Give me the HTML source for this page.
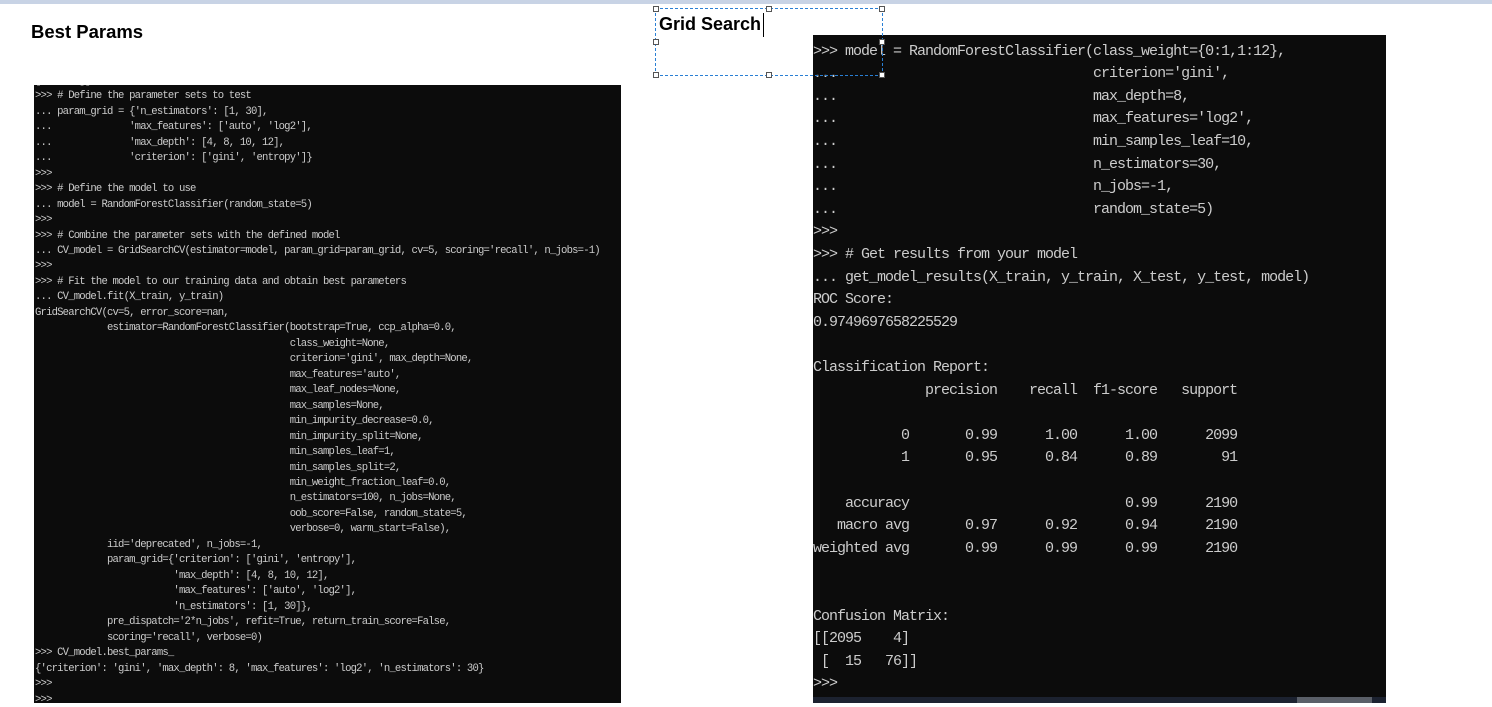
<!DOCTYPE html>
<html><head><style>
body{margin:0;width:1492px;height:707px;background:#fff;position:relative;overflow:hidden;font-family:"Liberation Sans",sans-serif}
.bar{position:absolute;left:0;top:0;width:1492px;height:4px;background:#c8d3e5}
.t{position:absolute;font-weight:bold;font-size:18px;color:#000}
.term{position:absolute;background:#0c0c0c;overflow:hidden}
pre{margin:0;position:absolute;left:0;color:#cccccc;font-family:"Liberation Mono",monospace}
#L{left:34px;top:85px;width:587px;height:618px}
#L pre{font-size:10.6px;line-height:15.47px;letter-spacing:-0.82px;top:-11.2px;left:1px}
#R{left:813px;top:35px;width:573px;height:668px}
#R pre{font-size:15px;line-height:22.6px;letter-spacing:-1px;top:5.7px;left:0}
.sb{position:absolute;left:0;bottom:0;width:573px;height:6px;background:#1c2230}
.th{position:absolute;left:484px;bottom:0;width:75px;height:6px;background:#5a5f68}
.box{position:absolute;left:655px;top:8px;width:226px;height:66px;border:1px dashed #2a7fd4}
.h{position:absolute;width:4px;height:4px;border:1px solid #555;background:#fff}
</style></head><body>
<div class="bar"></div>
<div class="t" style="left:31px;top:21px;font-size:18.5px">Best Params</div>
<div class="term" id="L"><pre>[  ...  ]]
&gt;&gt;&gt; # Define the parameter sets to test
... param_grid = {'n_estimators': [1, 30],
...              'max_features': ['auto', 'log2'],
...              'max_depth': [4, 8, 10, 12],
...              'criterion': ['gini', 'entropy']}
&gt;&gt;&gt;
&gt;&gt;&gt; # Define the model to use
... model = RandomForestClassifier(random_state=5)
&gt;&gt;&gt;
&gt;&gt;&gt; # Combine the parameter sets with the defined model
... CV_model = GridSearchCV(estimator=model, param_grid=param_grid, cv=5, scoring='recall', n_jobs=-1)
&gt;&gt;&gt;
&gt;&gt;&gt; # Fit the model to our training data and obtain best parameters
... CV_model.fit(X_train, y_train)
GridSearchCV(cv=5, error_score=nan,
             estimator=RandomForestClassifier(bootstrap=True, ccp_alpha=0.0,
                                              class_weight=None,
                                              criterion='gini', max_depth=None,
                                              max_features='auto',
                                              max_leaf_nodes=None,
                                              max_samples=None,
                                              min_impurity_decrease=0.0,
                                              min_impurity_split=None,
                                              min_samples_leaf=1,
                                              min_samples_split=2,
                                              min_weight_fraction_leaf=0.0,
                                              n_estimators=100, n_jobs=None,
                                              oob_score=False, random_state=5,
                                              verbose=0, warm_start=False),
             iid='deprecated', n_jobs=-1,
             param_grid={'criterion': ['gini', 'entropy'],
                         'max_depth': [4, 8, 10, 12],
                         'max_features': ['auto', 'log2'],
                         'n_estimators': [1, 30]},
             pre_dispatch='2*n_jobs', refit=True, return_train_score=False,
             scoring='recall', verbose=0)
&gt;&gt;&gt; CV_model.best_params_
{'criterion': 'gini', 'max_depth': 8, 'max_features': 'log2', 'n_estimators': 30}
&gt;&gt;&gt;
&gt;&gt;&gt;</pre></div>
<div class="term" id="R"><pre>&gt;&gt;&gt; model = RandomForestClassifier(class_weight={0:1,1:12},
...                                criterion='gini',
...                                max_depth=8,
...                                max_features='log2',
...                                min_samples_leaf=10,
...                                n_estimators=30,
...                                n_jobs=-1,
...                                random_state=5)
&gt;&gt;&gt;
&gt;&gt;&gt; # Get results from your model
... get_model_results(X_train, y_train, X_test, y_test, model)
ROC Score:
0.9749697658225529

Classification Report:
              precision    recall  f1-score   support

           0       0.99      1.00      1.00      2099
           1       0.95      0.84      0.89        91

    accuracy                           0.99      2190
   macro avg       0.97      0.92      0.94      2190
weighted avg       0.99      0.99      0.99      2190


Confusion Matrix:
[[2095    4]
 [  15   76]]
&gt;&gt;&gt;</pre><div class="sb"></div><div class="th"></div></div>
<div class="box"></div>
<div class="h" style="left:653px;top:6px"></div><div class="h" style="left:766px;top:6px"></div><div class="h" style="left:879px;top:6px"></div>
<div class="h" style="left:653px;top:39px"></div><div class="h" style="left:879px;top:39px"></div>
<div class="h" style="left:653px;top:72px"></div><div class="h" style="left:766px;top:72px"></div><div class="h" style="left:879px;top:72px"></div>
<div class="t" style="left:659px;top:14px">Grid Search</div>
<div style="position:absolute;left:763px;top:13px;width:1px;height:24px;background:#000"></div>
</body></html>
